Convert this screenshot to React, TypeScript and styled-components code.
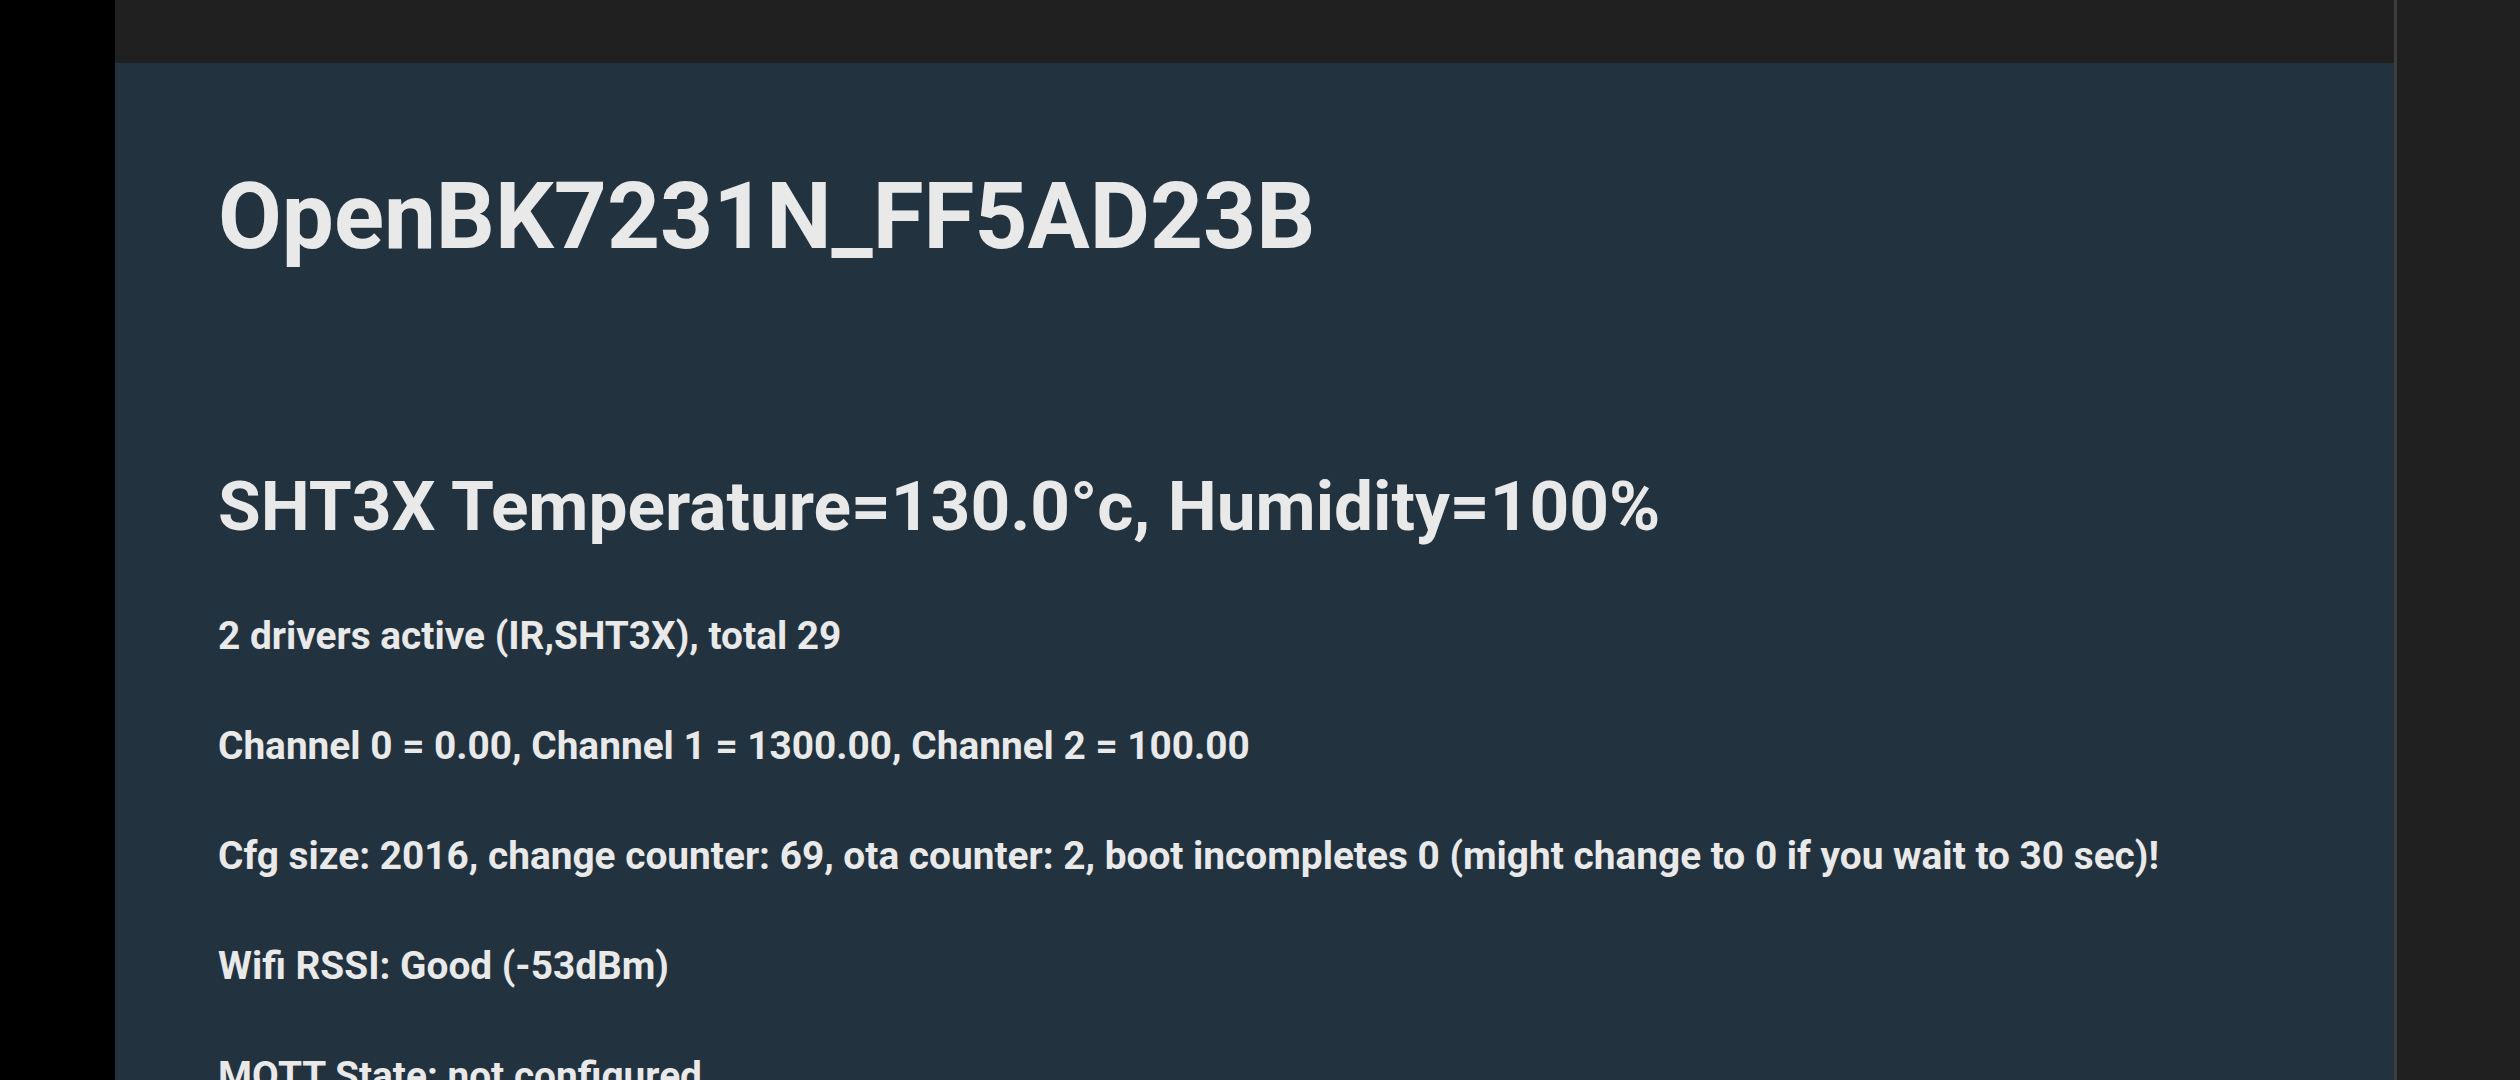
import styled, { createGlobalStyle } from "styled-components";

const GlobalStyle = createGlobalStyle`
  html, body {
    margin: 0;
    padding: 0;
    background: #000000;
  }
  #root {
    height: 100vh;
  }
`;

const Page = styled.div`
  width: 2520px;
  height: 1080px;
  display: flex;
  flex-direction: row;
  overflow: hidden;
  font-family: Roboto, "Liberation Sans", sans-serif;
`;

const Gutter = styled.div`
  width: 115px;
  flex-shrink: 0;
  background: #000000;
`;

const MainColumn = styled.div`
  flex: 1;
  display: flex;
  flex-direction: column;
  background: #22333f;
`;

const TopBar = styled.div`
  height: 63px;
  flex-shrink: 0;
  background: #202020;
`;

const Content = styled.main`
  display: flex;
  flex-direction: column;
  padding: 107px 0 0 103px;
  color: #e9e9e9;
`;

const Title = styled.h1`
  margin: 0;
  font-size: 92.6px;
  line-height: 93px;
  font-weight: 700;
`;

const SensorHeading = styled.h2`
  margin: 209px 0 0;
  font-size: 69.4px;
  line-height: 69px;
  font-weight: 700;
`;

const InfoList = styled.div`
  margin-top: 75px;
  display: flex;
  flex-direction: column;
  gap: 70px;
`;

const InfoLine = styled.p`
  margin: 0;
  font-size: 38.8px;
  line-height: 40px;
  font-weight: 700;
  white-space: nowrap;
`;

const Divider = styled.div`
  width: 3px;
  flex-shrink: 0;
  background: #3d3d3d;
`;

const SidePane = styled.div`
  flex: 0 0 123px;
  background: #202020;
`;

const lines = [
  "2 drivers active (IR,SHT3X), total 29",
  "Channel 0 = 0.00, Channel 1 = 1300.00, Channel 2 = 100.00",
  "Cfg size: 2016, change counter: 69, ota counter: 2, boot incompletes 0 (might change to 0 if you wait to 30 sec)!",
  "Wifi RSSI: Good (-53dBm)",
  "MQTT State: not configured",
];

const App = () => {
  return (
    <>
      <GlobalStyle />
      <Page>
        <Gutter />
        <MainColumn>
          <TopBar />
          <Content>
            <Title>OpenBK7231N_FF5AD23B</Title>
            <SensorHeading>SHT3X Temperature=130.0°c, Humidity=100%</SensorHeading>
            <InfoList>
              {lines.map((line) => (
                <InfoLine key={line}>{line}</InfoLine>
              ))}
            </InfoList>
          </Content>
        </MainColumn>
        <Divider />
        <SidePane />
      </Page>
    </>
  );
};

export default App;
